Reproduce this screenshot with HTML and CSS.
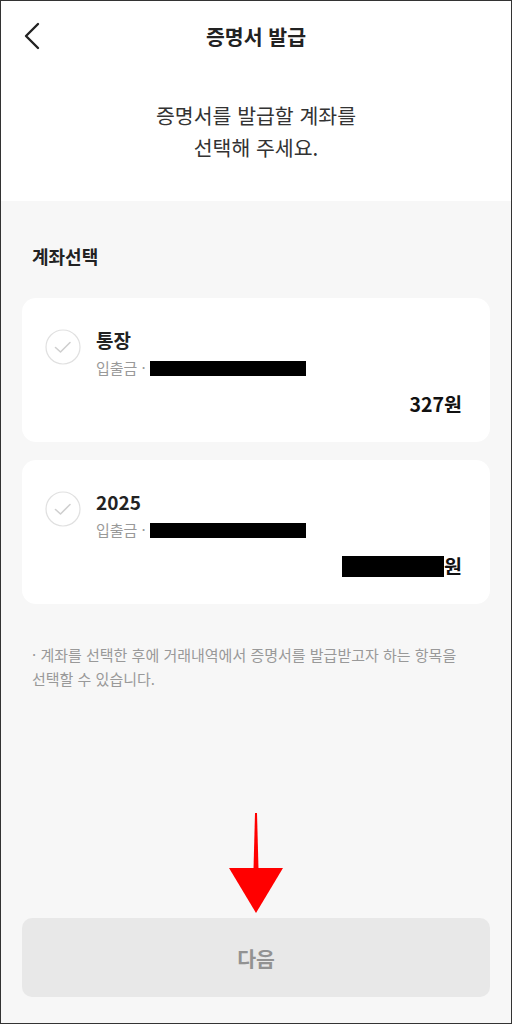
FILE: index.html
```html
<!DOCTYPE html>
<html lang="ko">
<head>
    <meta charset="UTF-8">
    <meta name="viewport" content="width=device-width, initial-scale=1.0">
    <title>증명서 발급</title>
    <link rel="stylesheet" href="styles.css">
</head>
<body>

<div class="screen">
    <header class="topbar">
        <button class="back" aria-label="뒤로">
            <svg width="18" height="28" viewBox="0 0 18 28">
                <path d="M15 2 L3 14 L15 26" fill="none" stroke="#222" stroke-width="2.4" stroke-linecap="round" stroke-linejoin="round"/>
            </svg>
        </button>
        <h1 class="title">증명서 발급</h1>
    </header>

    <div class="intro">
        증명서를 발급할 계좌를<br>선택해 주세요.
    </div>

    <main class="content">
        <h2 class="section-title">계좌선택</h2>

        <div class="account">
            <span class="check">
                <svg width="36" height="36" viewBox="0 0 36 36">
                    <circle cx="18" cy="18" r="17" fill="#fff" stroke="#e0e0e0" stroke-width="1.2"/>
                    <path d="M10.5 18.5 L15.5 23 L25 13.5" fill="none" stroke="#cfcfcf" stroke-width="1.6" stroke-linecap="round" stroke-linejoin="round"/>
                </svg>
            </span>
            <div class="account-info">
                <div class="account-name">통장</div>
                <div class="account-sub">입출금 · <span class="masked"></span></div>
                <div class="account-amount">327원</div>
            </div>
        </div>

        <div class="account">
            <span class="check">
                <svg width="36" height="36" viewBox="0 0 36 36">
                    <circle cx="18" cy="18" r="17" fill="#fff" stroke="#e0e0e0" stroke-width="1.2"/>
                    <path d="M10.5 18.5 L15.5 23 L25 13.5" fill="none" stroke="#cfcfcf" stroke-width="1.6" stroke-linecap="round" stroke-linejoin="round"/>
                </svg>
            </span>
            <div class="account-info">
                <div class="account-name">2025</div>
                <div class="account-sub">입출금 · <span class="masked"></span></div>
                <div class="account-amount"><span class="masked amount"></span>원</div>
            </div>
        </div>

        <p class="note">· 계좌를 선택한 후에 거래내역에서 증명서를 발급받고자 하는 항목을<br>선택할 수 있습니다.</p>

        <button class="next" disabled>다음</button>
    </main>

    <!-- pointer to the next button -->
    <svg class="pointer" width="60" height="104" viewBox="0 0 60 104">
        <polygon points="29,0 31,0 32.5,56 27.5,56" fill="#ff0000"/>
        <polygon points="3,55 57,55 30,100" fill="#ff0000"/>
    </svg>
</div>

</body>
</html>
```

FILE: styles.css
```css
* {
    box-sizing: border-box;
}

body {
    margin: 0;
    font-family: "Noto Sans CJK KR", "Noto Sans", sans-serif;
    color: #222;
}

.screen {
    position: relative;
    width: 512px;
    height: 1024px;
    border: 1px solid #333;
    display: flex;
    flex-direction: column;
    background-color: #fff;
}

.topbar {
    position: relative;
    height: 70px;
    display: flex;
    align-items: center;
    justify-content: center;
}

.back {
    position: absolute;
    left: 22px;
    top: 21px;
    padding: 0;
    border: none;
    background: none;
}

.title {
    margin: 0;
    font-size: 20.5px;
    font-weight: 700;
    line-height: 24px;
}

.intro {
    padding: 28px 0 38px;
    text-align: center;
    font-size: 20.5px;
    line-height: 32px;
    color: #333;
}

.content {
    flex: 1;
    display: flex;
    flex-direction: column;
    padding: 0 21px 26px;
    background-color: #f7f7f7;
}

.section-title {
    margin: 43px 0 30px 10px;
    font-size: 18px;
    font-weight: 700;
    line-height: 24px;
}

.account {
    display: flex;
    gap: 15px;
    padding: 30px 28px 26px 23px;
    margin-bottom: 18px;
    background-color: #fff;
    border-radius: 14px;
}

.check {
    margin-top: 1px;
    width: 36px;
    height: 36px;
}

.account-info {
    flex: 1;
}

.account-name {
    font-size: 19px;
    font-weight: 700;
    line-height: 24px;
}

.account-sub {
    margin-top: 6px;
    font-size: 15px;
    line-height: 20px;
    color: #999;
}

.masked {
    display: inline-block;
    width: 156px;
    height: 15px;
    vertical-align: -2px;
    background-color: #000;
}

.account-amount {
    margin-top: 14px;
    text-align: right;
    font-size: 19.5px;
    font-weight: 700;
    line-height: 24px;
    color: #111;
}

.masked.amount {
    width: 102px;
    height: 21px;
    vertical-align: -3px;
}

.note {
    margin: 21px 0 0 10px;
    font-size: 15px;
    line-height: 24px;
    color: #999;
}

.next {
    margin-top: auto;
    height: 79px;
    border: none;
    border-radius: 10px;
    background-color: #e8e8e8;
    color: #929292;
    font-family: inherit;
    font-size: 20.5px;
    font-weight: 700;
}

.pointer {
    position: absolute;
    left: 225px;
    top: 812px;
}
```
